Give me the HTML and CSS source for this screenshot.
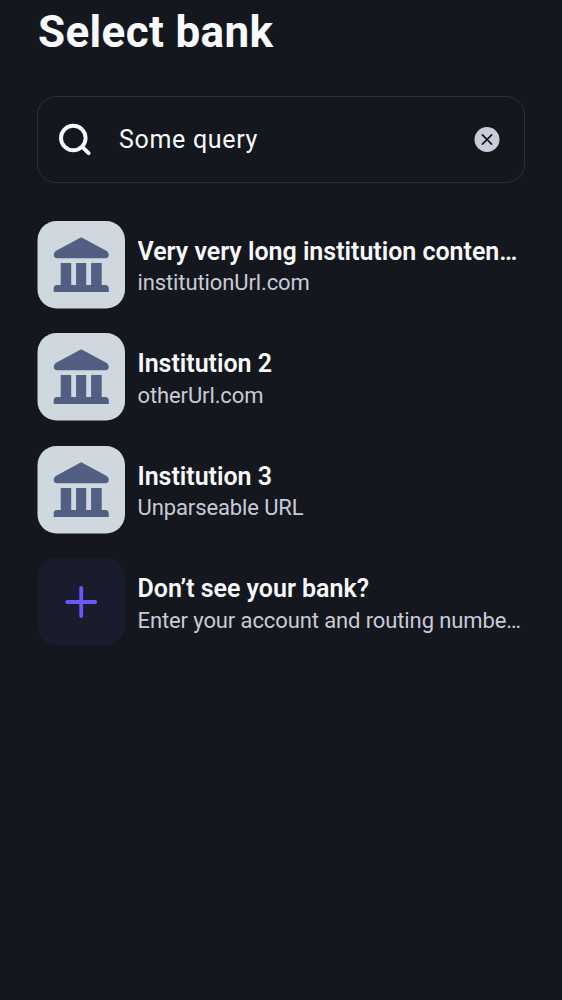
FILE: index.html
```html
<!DOCTYPE html>
<html lang="en">
<head>
<meta charset="utf-8">
<title>Select bank</title>
<link rel="stylesheet" href="styles.css">
</head>
<body>
<svg class="defs" width="0" height="0" aria-hidden="true">
  <symbol id="bank" viewBox="0 0 88 88">
    <rect class="plate" x=".5" y="0" width="87.5" height="87.5" rx="19"/>
    <path d="M44.200 16.300L69.800 30.100Q71.800 31.500 71.800 33.800Q71.800 37.200 68.200 37.200H20.200Q16.700 37.200 16.700 33.800Q16.700 31.500 18.700 30.100ZM23.700 42H34.200V64H39.100V42H49.200V64H54.100V42H64.700V64H68.500Q71.800 64 71.800 67.500V71H16.700V67.500Q16.700 64 20 64H23.700Z"/>
  </symbol>
</svg>
<main class="page">
  <h1 class="title">Select bank</h1>
  <div class="search">
    <svg class="search-icon" viewBox="0 0 36 36"><circle cx="16.300" cy="16" r="12.300"/><path d="M25.500 25.200L31.600 31.200"/></svg>
    <span class="query">Some query</span>
    <svg class="clear" viewBox="0 0 26 26"><circle cx="13" cy="12.500" r="12.500"/><path d="M8.400 7.900L17.600 17.100M17.600 7.900L8.400 17.100"/></svg>
  </div>
  <ul class="list">
    <li class="item"><svg class="tile"><use href="#bank"/></svg><div class="text"><div class="name">Very very long institution content so long</div><div class="url">institutionUrl.com</div></div></li>
    <li class="item"><svg class="tile"><use href="#bank"/></svg><div class="text"><div class="name">Institution 2</div><div class="url">otherUrl.com</div></div></li>
    <li class="item"><svg class="tile"><use href="#bank"/></svg><div class="text"><div class="name">Institution 3</div><div class="url">Unparseable URL</div></div></li>
    <li class="item"><svg class="tile add" viewBox="0 0 88 88"><rect class="plate" x=".5" y="0" width="87.5" height="87.5" rx="19"/><path d="M44.200 30V58M30.200 44H58.200"/></svg><div class="text"><div class="name">Don’t see your bank?</div><div class="url">Enter your account and routing numbers</div></div></li>
  </ul>
</main>
</body>
</html>
```
FILE: styles.css
```css
* { box-sizing: border-box; }
body { margin: 0; background: #14171e; color: #f7f8fa; font-family: Roboto, sans-serif; }
.defs { display: block; }
.page { height: 1000px; padding: 7px 37px 0; overflow: hidden; }
.title { margin: 0; padding-left: 1px; font-size: 44px; line-height: 50px; font-weight: 700; letter-spacing: .35px; }
.search { height: 87px; margin-top: 39px; border: 1px solid #2e3038; border-radius: 19px; display: flex; align-items: center; padding: 0 24px 0 19px; }
.search-icon { width: 36px; height: 36px; fill: none; stroke: #f7f8fa; stroke-width: 3.900; stroke-linecap: round; }
.query { flex: 1; margin-left: 26px; font-size: 25px; letter-spacing: .68px; }
.clear { width: 26px; height: 26px; fill: #cacdd9; stroke: #14171e; stroke-width: 1.700; stroke-linecap: round; }
.clear circle { stroke: none; }
.list { list-style: none; margin: 37.900px 0 0; padding: 0; display: grid; grid-template-columns: minmax(0, 1fr); gap: 25px; }
.item { display: flex; height: 87.500px; gap: 12.500px; align-items: flex-start; }
.tile { width: 88px; height: 88px; flex: none; fill: #505f82; }
.plate { fill: #d0d8df; stroke: none; }
.add { fill: none; stroke: #6559fa; stroke-width: 3.800; stroke-linecap: round; }
.add .plate { fill: #1b1b2e; }
.text { min-width: 0; flex: 1; padding: 13.800px 2px 0 0; }
.name, .url { overflow: hidden; text-overflow: ellipsis; white-space: nowrap; }
.name { font-size: 25px; line-height: 34px; font-weight: 600; letter-spacing: -.02px; }
.url { margin-top: -.600px; font-size: 22px; line-height: 30px; letter-spacing: -.11px; color: #c8cbd6; }
```
